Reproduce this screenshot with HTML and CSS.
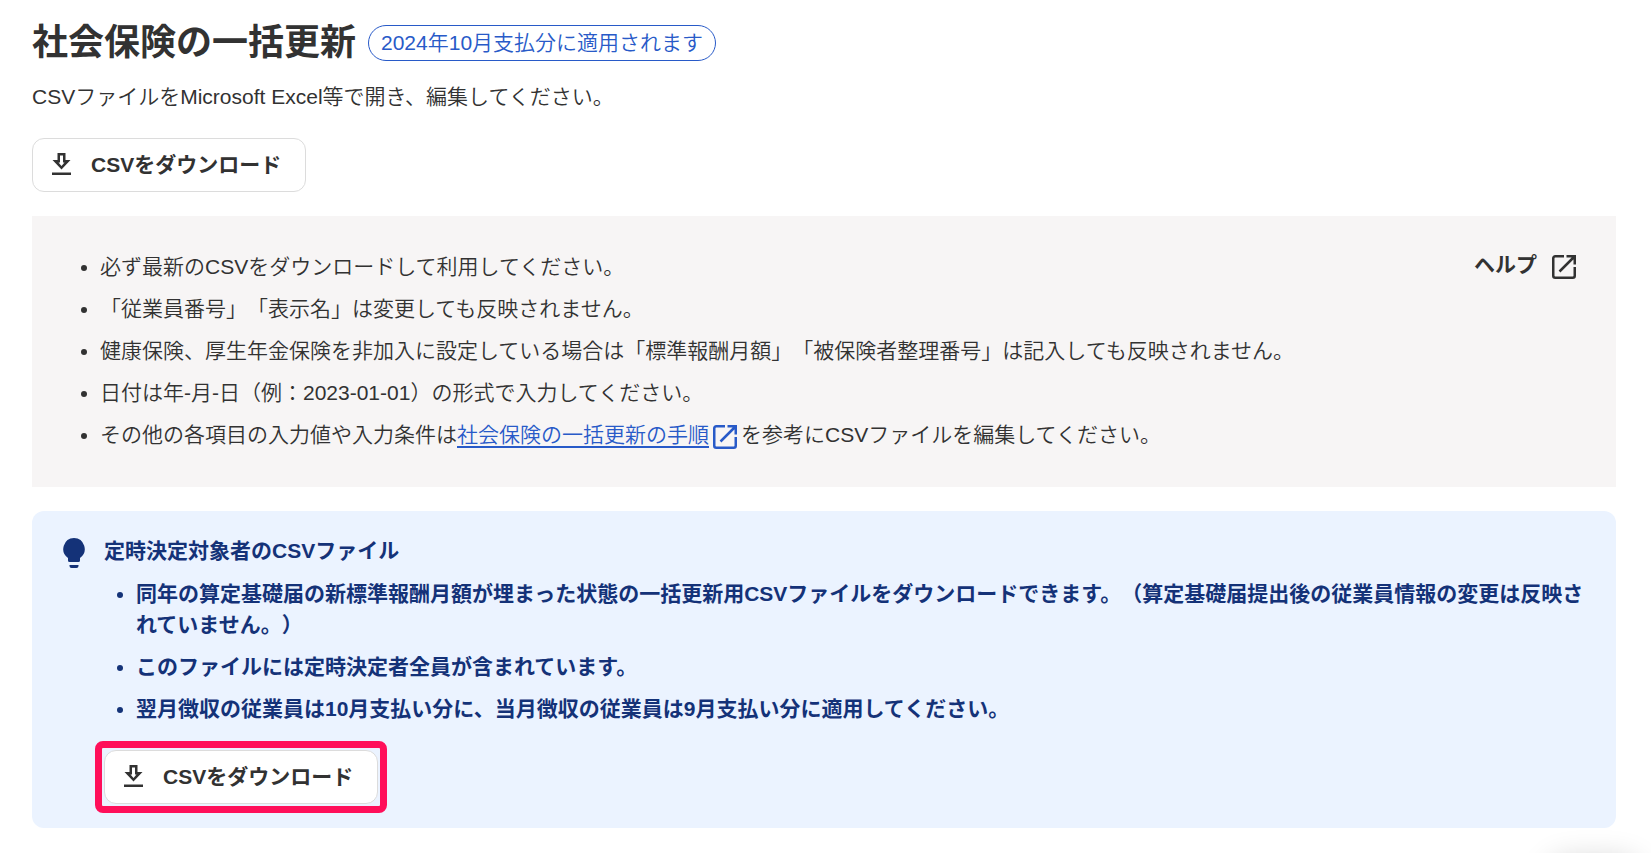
FILE: index.html
```html
<!DOCTYPE html>
<html lang="ja">

<head>
    <meta charset="UTF-8">
    <meta name="viewport" content="width=device-width, initial-scale=1.0">
    <title>社会保険の一括更新</title>
    <link rel="stylesheet" href="styles.css">
</head>

<body>
    <!-- shared icons -->
    <svg class="sprite" aria-hidden="true">
        <symbol id="icon-download" viewBox="0 0 19 24">
            <path fill="currentColor" fill-rule="evenodd" d="M5.500 1h8v7h5L9.500 17.500 .5 8h5zM8 3.500v7h-1.500l3 3.500 3-3.500H11v-7z" />
            <path fill="currentColor" d="M0 20.500h19V23H0z" />
        </symbol>
        <symbol id="icon-external" viewBox="0 0 24 24">
            <path fill="none" stroke="currentColor" stroke-width="2.500" d="M12 1.250H3.250a2 2 0 0 0-2 2v17.500a2 2 0 0 0 2 2h17.500a2 2 0 0 0 2-2V12M14.500 1.250h8.250V9.500M22.500 1.500L7.500 16.500" />
        </symbol>
        <symbol id="icon-bulb" viewBox="0 0 22 30">
            <path fill="currentColor" d="M11 0a11 11 0 0 0-6 20v2.500a1.500 1.500 0 0 0 1.500 1.500h9a1.500 1.500 0 0 0 1.500-1.500V20A11 11 0 0 0 11 0zM6.500 27h9v1a2 2 0 0 1-2 2h-5a2 2 0 0 1-2-2z" />
        </symbol>
    </svg>

    <main class="page">
        <header class="page-header">
            <h1>社会保険の一括更新</h1>
            <span class="badge">2024年10月支払分に適用されます</span>
        </header>
        <p class="lead">CSVファイルをMicrosoft Excel等で開き、編集してください。</p>
        <button type="button" class="btn">
            <svg class="icon-download"><use href="#icon-download" /></svg>
            CSVをダウンロード
        </button>

        <section class="notes">
            <ul class="list">
                <li>必ず最新のCSVをダウンロードして利用してください。</li>
                <li>「従業員番号」「表示名」は変更しても反映されません。</li>
                <li>健康保険、厚生年金保険を非加入に設定している場合は「標準報酬月額」「被保険者整理番号」は記入しても反映されません。</li>
                <li>日付は年-月-日（例：2023-01-01）の形式で入力してください。</li>
                <li>その他の各項目の入力値や入力条件は<a class="guide-link" href="#"><span>社会保険の一括更新の手順</span><svg class="icon-external"><use href="#icon-external" /></svg></a>を参考にCSVファイルを編集してください。</li>
            </ul>
            <a class="help" href="#">ヘルプ<svg class="icon-external"><use href="#icon-external" /></svg></a>
        </section>

        <section class="tip">
            <svg class="icon-bulb"><use href="#icon-bulb" /></svg>
            <div class="tip-body">
                <h2>定時決定対象者のCSVファイル</h2>
                <ul class="list">
                    <li>同年の算定基礎届の新標準報酬月額が埋まった状態の一括更新用CSVファイルをダウンロードできます。（算定基礎届提出後の従業員情報の変更は反映されていません。）</li>
                    <li>このファイルには定時決定者全員が含まれています。</li>
                    <li>翌月徴収の従業員は10月支払い分に、当月徴収の従業員は9月支払い分に適用してください。</li>
                </ul>
                <button type="button" class="btn highlight">
                    <svg class="icon-download"><use href="#icon-download" /></svg>
                    CSVをダウンロード
                </button>
            </div>
        </section>
    </main>
    <div class="corner-shadow"></div>
</body>

</html>
```
FILE: styles.css
```css
* {
    box-sizing: border-box;
    margin: 0;
    padding: 0;
}

body {
    font-family: "Liberation Sans", "Noto Sans CJK JP", sans-serif;
    font-size: 21px;
    font-weight: 350;
    line-height: 31px;
    color: #323232;
    background: #fff;
    text-spacing-trim: space-all;
}

.sprite {
    position: absolute;
    width: 0;
    height: 0;
}

.page {
    padding: 16px 35px 24px 32px;
}

.page-header {
    display: flex;
    align-items: center;
    gap: 12px;
}

h1 {
    font-size: 36px;
    line-height: 54px;
}

.badge {
    padding: 1px 12px 2px;
    border: 1px solid #285ac8;
    border-radius: 18px;
    color: #285ac8;
}

.lead {
    margin: 11px 0 26px;
}

.btn {
    display: flex;
    align-items: center;
    gap: 20px;
    height: 54px;
    padding: 0 24px 2px 19px;
    border: 1px solid #dcdcdc;
    border-radius: 12px;
    background: #fff;
    color: #323232;
    font: inherit;
    font-weight: bold;
    text-spacing-trim: inherit;
    cursor: pointer;
}

.icon-download {
    width: 19px;
    height: 24px;
}

.icon-external {
    width: 24px;
    height: 24px;
}

.notes {
    display: flex;
    justify-content: space-between;
    align-items: flex-start;
    margin-top: 24px;
    padding: 35px 40px 37px 36px;
    background: #f7f5f5;
}

.list {
    padding-left: 32px;
}

.list li + li {
    margin-top: 11px;
}

.guide-link {
    color: #285ac8;
    text-decoration: none;
}

.guide-link span {
    border-bottom: 2px solid;
}

.guide-link .icon-external {
    margin: 0 4px;
    vertical-align: -7px;
}

.help {
    color: inherit;
    font-weight: bold;
    line-height: 27px;
    text-decoration: none;
}

.help .icon-external {
    margin-left: 15px;
    vertical-align: -7px;
}

.tip {
    display: flex;
    gap: 19px;
    margin-top: 24px;
    padding: 24px 24px 24px 31px;
    border-radius: 12px;
    background: #ebf3ff;
    color: #143278;
    font-weight: bold;
}

.icon-bulb {
    flex: none;
    width: 22px;
    height: 30px;
    margin-top: 3px;
}

.tip-body {
    flex: 1;
}

h2 {
    margin-bottom: 12px;
    font-size: 21px;
}

.highlight {
    position: relative;
    margin-top: 26px;
}

/* frame drawn around the button */
.highlight::after {
    content: "";
    position: absolute;
    inset: -10px;
    border: 7px solid #ff0f5a;
    border-radius: 8px;
}

/* soft shadow of the floating widget below the fold */
.corner-shadow {
    position: fixed;
    right: 12px;
    bottom: -44px;
    width: 90px;
    height: 36px;
    border-radius: 18px;
    box-shadow: 0 0 32px rgba(0, 0, 0, 0.2);
}
```
